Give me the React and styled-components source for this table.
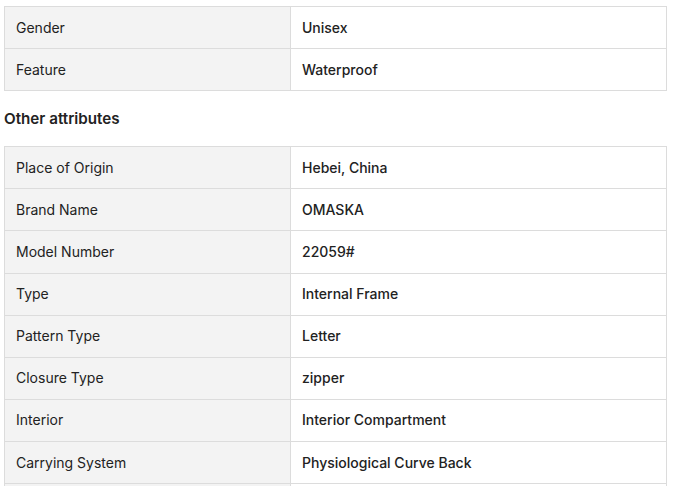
import React from "react";
import styled, { createGlobalStyle } from "styled-components";

const Global = createGlobalStyle`
  html, body { margin: 0; padding: 0; background: #fff; }
  body { font-family: Inter, "Noto Sans", sans-serif; color: #222; }
`;

const Page = styled.div`
  width: 663px;
  padding: 6px 0 0 4px;
`;

const Table = styled.table`
  width: 100%;
  border-collapse: collapse;
  table-layout: fixed;
  font-size: 14px;
`;

const Row = styled.tr`
  height: 42.12px;
`;

const Cell = styled.td`
  box-sizing: border-box;
  border: 1px solid #dcdcdc;
  padding: 0 11px;
  vertical-align: middle;
  line-height: 20px;
  color: #222;
  background: ${(p) => (p.$label ? "#f3f3f3" : "#fff")};
  font-weight: ${(p) => (p.$label ? 400 : 500)};
  width: ${(p) => (p.$label ? "286px" : "auto")};
`;

const Heading = styled.h3`
  margin: 16px 0 15px;
  font-size: 15.2px;
  line-height: 24px;
  font-weight: 600;
  color: #222;
`;

const top = [
  ["Gender", "Unisex"],
  ["Feature", "Waterproof"],
];

const other = [
  ["Place of Origin", "Hebei, China"],
  ["Brand Name", "OMASKA"],
  ["Model Number", "22059#"],
  ["Type", "Internal Frame"],
  ["Pattern Type", "Letter"],
  ["Closure Type", "zipper"],
  ["Interior", "Interior Compartment"],
  ["Carrying System", "Physiological Curve Back"],
  ["", ""],
];

const AttrTable = ({ rows }) => (
  <Table>
    <tbody>
      {rows.map(([k, v], i) => (
        <Row key={i}>
          <Cell $label>{k}</Cell>
          <Cell>{v}</Cell>
        </Row>
      ))}
    </tbody>
  </Table>
);

export default function App() {
  return (
    <Page>
      <Global />
      <AttrTable rows={top} />
      <Heading>Other attributes</Heading>
      <AttrTable rows={other} />
    </Page>
  );
}
